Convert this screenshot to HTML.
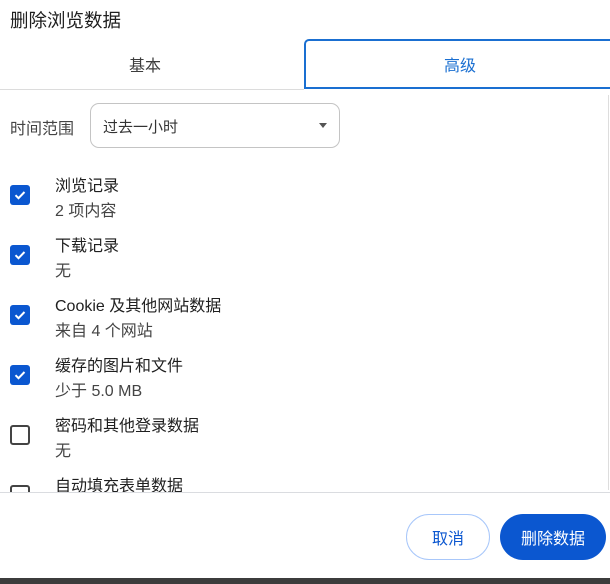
<!DOCTYPE html>
<html><head><meta charset="utf-8"><style>
*{margin:0;padding:0;box-sizing:border-box}
body{width:610px;height:584px;background:#fff;font-family:"Liberation Sans","Noto Sans CJK SC",sans-serif;color:#1f1f1f;position:relative;overflow:hidden}
.title{position:absolute;left:10px;top:7px;font-size:18.5px;color:#1f1f1f}
.tab{position:absolute;top:39px;height:50px;font-size:16px;display:flex;align-items:center;justify-content:center}
.t1{left:0;width:290px;color:#3c3c3c}
.t2{left:304px;width:310px;border:2px solid #1a6fd1;border-radius:5px 0 0 0;border-right:none;color:#1a6fd1}
.line{position:absolute;left:0;top:89px;width:304px;height:1px;background:#dcdcdc}
.lbl{position:absolute;left:10px;top:115px;font-size:16px;color:#444}
.sel{position:absolute;left:90px;top:103px;width:250px;height:45px;border:1px solid #c4c4c4;border-radius:9px;font-size:15px;padding:12px 0 0 12px;color:#333}
.sel:after{content:"";position:absolute;right:12px;top:19px;border:4px solid transparent;border-top:5px solid #555}
.cb{position:absolute;left:10px;width:20px;height:20px;border-radius:3px;background:#0b57d0}
.cb svg{position:absolute;left:3px;top:3px}
.cb.off{background:#fff;border:2px solid #444}
.h{position:absolute;left:55px;font-size:16px;color:#1f1f1f}
.s{position:absolute;left:55px;font-size:16px;color:#444}
.foot{position:absolute;left:0;top:492px;width:610px;height:86px;background:#fff;border-top:1px solid #dadce0}
.b1{position:absolute;left:406px;top:514px;width:84px;height:46px;border:1px solid #a8c7fa;border-radius:23px;color:#0b57d0;font-size:16px;display:flex;align-items:center;justify-content:center}
.b2{position:absolute;left:500px;top:514px;width:106px;height:46px;background:#0b57d0;border-radius:23px;color:#fff;font-size:16px;display:flex;align-items:center;justify-content:center}
.bar{position:absolute;left:0;top:578px;width:610px;height:6px;background:#3c3c3c}
.sb{position:absolute;left:608px;top:95px;width:1px;height:395px;background:#ddd}
</style></head><body>
<div class="title">删除浏览数据</div>
<div class="tab t1">基本</div>
<div class="tab t2">高级</div>
<div class="line"></div>
<div class="sb"></div>
<div class="lbl">时间范围</div>
<div class="sel">过去一小时</div>

<div class="cb" style="top:185px"><svg width="14" height="14" viewBox="0 0 14 14"><path d="M2.5 7.2l3 3 6-6.2" stroke="#fff" stroke-width="2" fill="none"/></svg></div>
<div class="h" style="top:172px">浏览记录</div><div class="s" style="top:197px">2 项内容</div>
<div class="cb" style="top:245px"><svg width="14" height="14" viewBox="0 0 14 14"><path d="M2.5 7.2l3 3 6-6.2" stroke="#fff" stroke-width="2" fill="none"/></svg></div>
<div class="h" style="top:232px">下载记录</div><div class="s" style="top:257px">无</div>
<div class="cb" style="top:305px"><svg width="14" height="14" viewBox="0 0 14 14"><path d="M2.5 7.2l3 3 6-6.2" stroke="#fff" stroke-width="2" fill="none"/></svg></div>
<div class="h" style="top:292px">Cookie 及其他网站数据</div><div class="s" style="top:317px">来自 4 个网站</div>
<div class="cb" style="top:365px"><svg width="14" height="14" viewBox="0 0 14 14"><path d="M2.5 7.2l3 3 6-6.2" stroke="#fff" stroke-width="2" fill="none"/></svg></div>
<div class="h" style="top:352px">缓存的图片和文件</div><div class="s" style="top:377px">少于 5.0 MB</div>
<div class="cb off" style="top:425px"></div>
<div class="h" style="top:412px">密码和其他登录数据</div><div class="s" style="top:437px">无</div>
<div class="cb off" style="top:485px"></div>
<div class="h" style="top:472px">自动填充表单数据</div>

<div class="foot"></div>
<div class="b1">取消</div>
<div class="b2">删除数据</div>
<div class="bar"></div>
</body></html>
